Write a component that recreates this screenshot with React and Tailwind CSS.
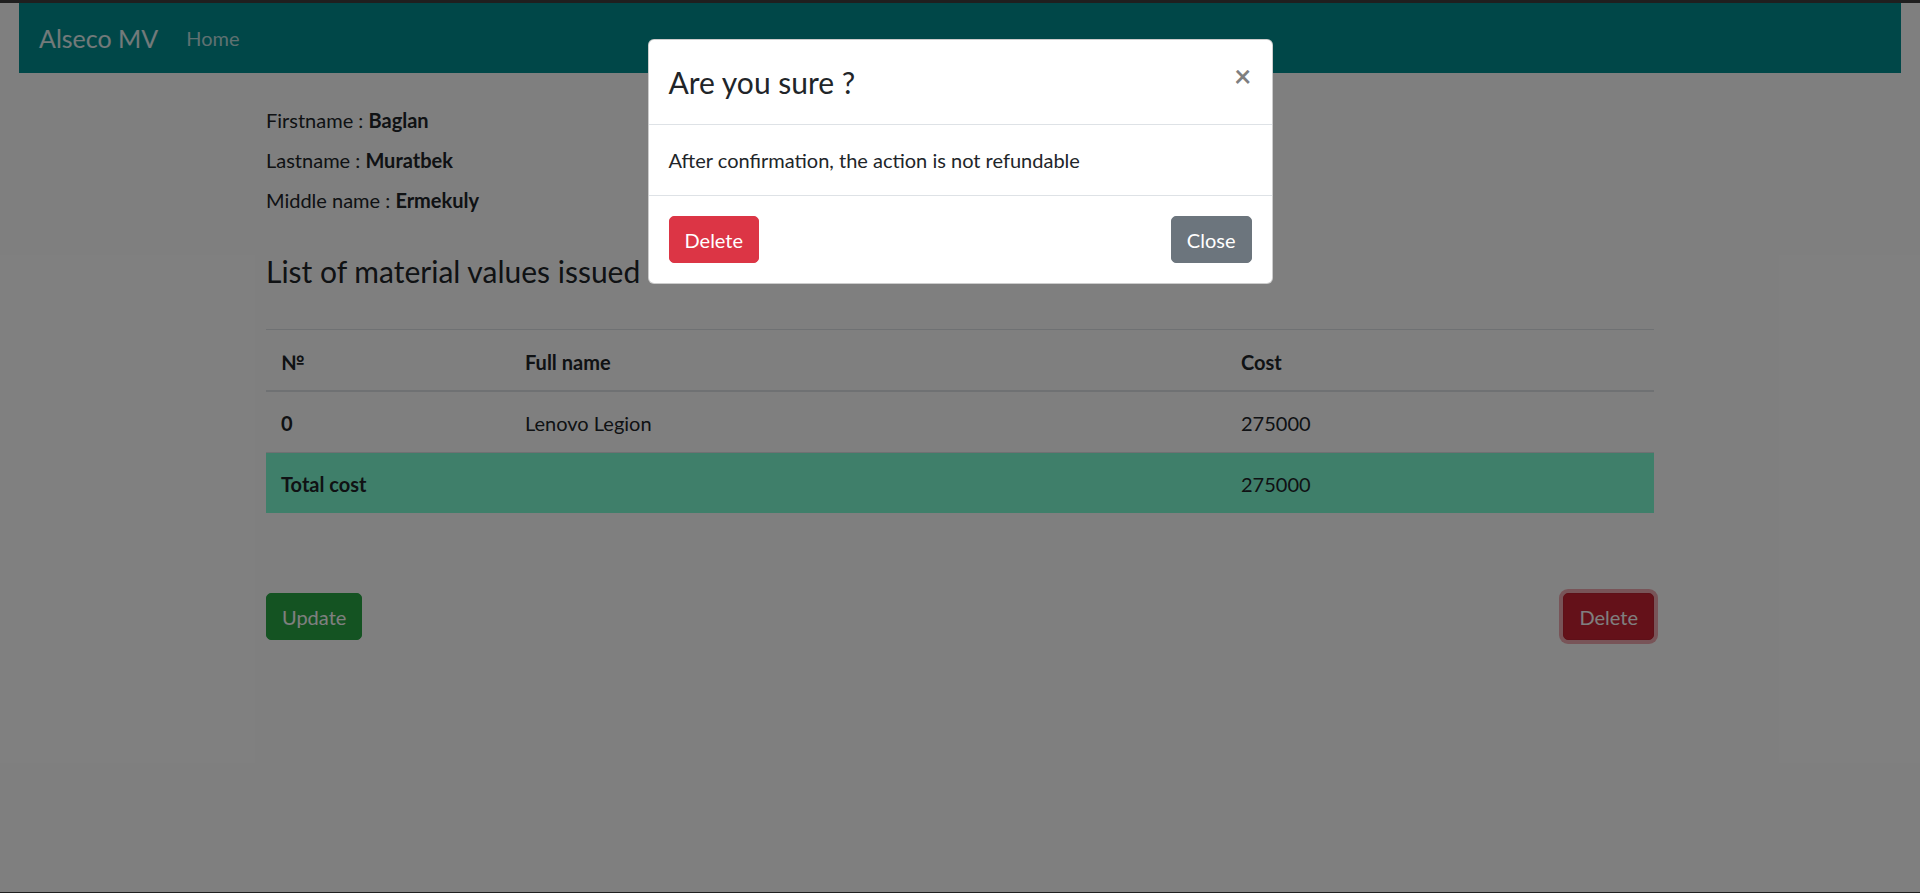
import React from "react";

const materials = [{ id: 0, name: "Lenovo Legion", cost: 275000 }];

const App = () => {
    const total = materials.reduce((sum, m) => sum + m.cost, 0);

    return (
        <div className="flex flex-col h-[893px] overflow-hidden bg-[#1f1f1f] font-['Lato','Open_Sans',sans-serif] text-[20px] leading-[30px] text-[#212529]">
            <div className="h-[3px] shrink-0 bg-[#1f1f1f]" />

            <div className="relative flex-1 bg-white">
                {/* navbar */}
                <nav className="mx-[19px] h-[70px] bg-[#008e90] flex items-center px-[20px]">
                    <span className="text-[25px] leading-[38px] text-white/90 mr-[18px]">Alseco MV</span>
                    <a className="px-[10px] text-white/75">Home</a>
                </nav>

                {/* page content */}
                <div className="w-[1388px] mx-auto pt-[32px]">
                    <div className="mb-[10px]">Firstname : <b>Baglan</b></div>
                    <div className="mb-[10px]">Lastname : <b>Muratbek</b></div>
                    <div>Middle name : <b>Ermekuly</b></div>

                    <h4 className="mt-[38px] text-[30px] leading-[36px]">
                        List of material values issued
                    </h4>

                    <table className="w-full mt-[40px] text-left">
                        <thead>
                            <tr className="border-t border-[#dee2e6] border-b-2">
                                <th className="w-[244px] px-[15px] pt-[17px] pb-[13px] font-bold">№</th>
                                <th className="w-[716px] px-[15px] pt-[17px] pb-[13px] font-bold">Full name</th>
                                <th className="px-[15px] pt-[17px] pb-[13px] font-bold">Cost</th>
                            </tr>
                        </thead>
                        <tbody>
                            {materials.map((m) => (
                                <tr key={m.id} className="border-b border-[#dee2e6]">
                                    <td className="px-[15px] pt-[16px] pb-[14px] font-bold">{m.id}</td>
                                    <td className="px-[15px] pt-[16px] pb-[14px]">{m.name}</td>
                                    <td className="px-[15px] pt-[16px] pb-[14px]">{m.cost}</td>
                                </tr>
                            ))}
                            <tr className="bg-[#7fffd4]">
                                <td className="px-[15px] pt-[16px] pb-[14px] font-bold">Total cost</td>
                                <td className="px-[15px] pt-[16px] pb-[14px]"></td>
                                <td className="px-[15px] pt-[16px] pb-[14px]">{total}</td>
                            </tr>
                        </tbody>
                    </table>

                    <div className="flex justify-between items-center mt-[80px]">
                        <button className="bg-[#28a745] border border-[#28a745] text-white px-[15px] py-[7.5px] rounded-[5px]">
                            Update
                        </button>
                        <button className="bg-[#c82333] border border-[#bd2130] text-white px-[15px] py-[7.5px] rounded-[5px] ring-4 ring-[#e15361]/50">
                            Delete
                        </button>
                    </div>
                </div>

                {/* modal backdrop */}
                <div className="absolute inset-0 bg-black/50" />

                {/* modal */}
                <div className="absolute inset-x-0 top-[36px] flex justify-center">
                    <div className="w-[625px] bg-white border border-black/20 rounded-[6px]">
                        <div className="flex items-start justify-between p-[20px] pb-[19px] border-b border-[#dee2e6]">
                            <h4 className="text-[30px] leading-[45px] text-[#212529]">Are you sure ?</h4>
                            <button className="-m-[20px] p-[20px] text-[30px] leading-[30px] font-bold text-black/50">
                                ×
                            </button>
                        </div>
                        <div className="p-[20px]">After confirmation, the action is not refundable</div>
                        <div className="flex justify-between items-center p-[20px] border-t border-[#dee2e6]">
                            <button className="bg-[#dc3545] border border-[#dc3545] text-white px-[15px] py-[7.5px] rounded-[5px]">
                                Delete
                            </button>
                            <button className="bg-[#6c757d] border border-[#6c757d] text-white px-[15px] py-[7.5px] rounded-[5px]">
                                Close
                            </button>
                        </div>
                    </div>
                </div>
            </div>

            <div className="h-px shrink-0 bg-[#1f1f1f]" />
        </div>
    );
};

export default App;
